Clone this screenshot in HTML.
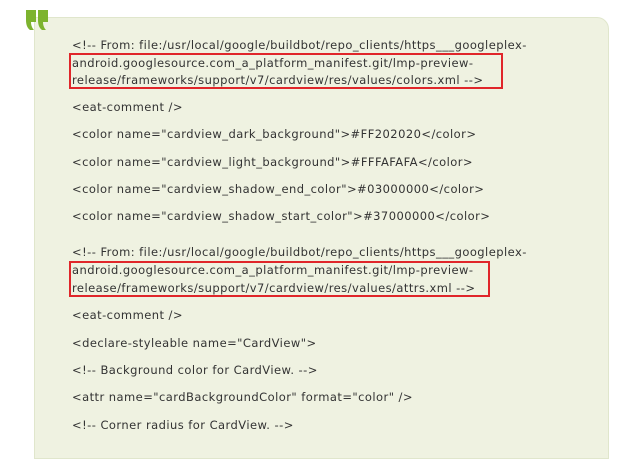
<!DOCTYPE html>
<html><head><style>
body{margin:0;width:640px;height:447px;background:#fff;position:relative;overflow:hidden;font-family:"DejaVu Sans","Liberation Sans",sans-serif;}
.box{position:absolute;left:34px;top:17px;width:573px;height:440px;background:#eff2e1;border:1px solid #e0e6cc;border-radius:0 12px 0 0;}
.l{position:absolute;left:72px;font-size:11.5px;letter-spacing:0.45px;color:#333;white-space:nowrap;line-height:12px;}
.r{position:absolute;border:2px solid #e0262a;}
</style></head><body>
<div class="box"></div>
<svg style="position:absolute;left:26px;top:10px" width="24" height="22" viewBox="0 0 24 22"><path d="M0 0H10V12H5C5 15 6 18 8 20H4C1 18 0 14 0 10Z" fill="#7db32e"/><path d="M12 0H22V12H17C17 15 18 18 20 20H16C13 18 12 14 12 10Z" fill="#7db32e"/></svg>
<div class="l" style="top:39px">&lt;!-- From: file:/usr/local/google/buildbot/repo_clients/https___googleplex-</div>
<div class="l" style="top:57px">android.googlesource.com_a_platform_manifest.git/lmp-preview-</div>
<div class="l" style="top:74px">release/frameworks/support/v7/cardview/res/values/colors.xml --&gt;</div>
<div class="r" style="left:69px;top:53px;width:430px;height:32px;border-color:#e0262a"></div>
<div class="l" style="top:101px">&lt;eat-comment /&gt;</div>
<div class="l" style="top:128px">&lt;color name="cardview_dark_background"&gt;#FF202020&lt;/color&gt;</div>
<div class="l" style="top:156px">&lt;color name="cardview_light_background"&gt;#FFFAFAFA&lt;/color&gt;</div>
<div class="l" style="top:183px">&lt;color name="cardview_shadow_end_color"&gt;#03000000&lt;/color&gt;</div>
<div class="l" style="top:210px">&lt;color name="cardview_shadow_start_color"&gt;#37000000&lt;/color&gt;</div>
<div class="l" style="top:246px">&lt;!-- From: file:/usr/local/google/buildbot/repo_clients/https___googleplex-</div>
<div class="l" style="top:264px">android.googlesource.com_a_platform_manifest.git/lmp-preview-</div>
<div class="l" style="top:282px">release/frameworks/support/v7/cardview/res/values/attrs.xml --&gt;</div>
<div class="r" style="left:69px;top:261px;width:417px;height:32px"></div>
<div class="l" style="top:309px">&lt;eat-comment /&gt;</div>
<div class="l" style="top:337px">&lt;declare-styleable name="CardView"&gt;</div>
<div class="l" style="top:364px">&lt;!-- Background color for CardView. --&gt;</div>
<div class="l" style="top:391px">&lt;attr name="cardBackgroundColor" format="color" /&gt;</div>
<div class="l" style="top:419px">&lt;!-- Corner radius for CardView. --&gt;</div>
</body></html>
